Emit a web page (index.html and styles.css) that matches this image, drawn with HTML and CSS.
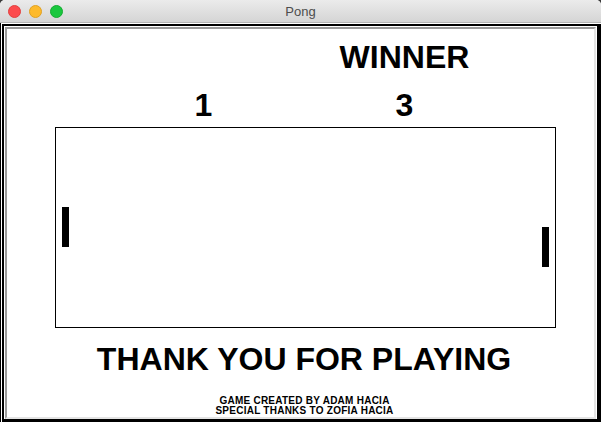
FILE: index.html
```html
<!DOCTYPE html>
<html>
<head>
<meta charset="utf-8">
<link rel="stylesheet" href="styles.css">
<title>Pong</title>
</head>
<body>
<div class="window">
  <div class="titlebar">
    <div class="lights">
      <span class="light red"></span>
      <span class="light yellow"></span>
      <span class="light green"></span>
    </div>
    <div class="title">Pong</div>
  </div>
  <div class="content">
    <div class="frame">
      <div class="inner">
        <div class="scoreboard">
          <div class="winner">WINNER</div>
          <div class="score">1</div>
          <div class="score">3</div>
        </div>
        <div class="field">
          <div class="paddle left"></div>
          <div class="paddle right"></div>
        </div>
        <div class="thanks">THANK YOU FOR PLAYING</div>
        <div class="credits">
          <div>GAME CREATED BY ADAM HACIA</div>
          <div>SPECIAL THANKS TO ZOFIA HACIA</div>
        </div>
      </div>
    </div>
  </div>
</div>
</body>
</html>
```

FILE: styles.css
```css
* { box-sizing: border-box; }
html, body {
  margin: 0;
  padding: 0;
  background: #3a3a3a;
}
.window {
  width: 601px;
  height: 422px;
  background: #fff;
  border-radius: 5px 5px 0 0;
  overflow: hidden;
  font-family: "Liberation Sans", Arial, sans-serif;
}
.titlebar {
  position: relative;
  height: 23px;
  background: linear-gradient(#ebebeb, #d5d5d5);
  border-bottom: 1px solid #b4b4b4;
  display: flex;
  align-items: center;
  justify-content: center;
}
.lights {
  position: absolute;
  left: 8px;
  top: 5px;
  display: flex;
  gap: 8px;
}
.light {
  width: 13px;
  height: 13px;
  border-radius: 50%;
  display: block;
}
.red { background: #fc4b4d; border: 0.5px solid #e0403f; }
.yellow { background: #fdba2c; border: 0.5px solid #dfa023; }
.green { background: #19c73e; border: 0.5px solid #14ab31; }
.title {
  font-size: 13px;
  color: #4d4d4d;
  line-height: 16px;
  margin-top: 1px;
}
.content {
  height: 399px;
  border-left: 1px solid #000;
  padding: 1px 0 0 1px;
}
.frame {
  height: 398px;
  border: 2px solid #000;
  border-right-width: 4px;
  border-bottom-width: 3px;
  padding: 1px;
}
.inner {
  height: 392px;
  border: 2px solid;
  border-color: #9b9b9b #e4e4e4 #e4e4e4 #9b9b9b;
  padding-top: 12px;
  color: #000;
  font-weight: bold;
}
.scoreboard {
  display: grid;
  grid-template-columns: 201px 201px;
  row-gap: 16px;
  margin-left: 96px;
  font-size: 32px;
  line-height: 32px;
  text-align: center;
}
.winner {
  grid-column: 2;
}
.field {
  position: relative;
  margin: 6px 0 0 48px;
  width: 501px;
  height: 201px;
  border: 1px solid #000;
}
.paddle {
  position: absolute;
  width: 7px;
  height: 40px;
  background: #000;
}
.paddle.left { left: 6px; top: 79px; }
.paddle.right { left: 486px; top: 99px; }
.thanks {
  margin: 15px 0 0 48px;
  width: 498px;
  text-align: center;
  font-size: 32px;
  line-height: 32px;
}
.credits {
  margin: 21px 0 0 48px;
  width: 499px;
  text-align: center;
  font-size: 10px;
  line-height: 10px;
  letter-spacing: 0.25px;
}
```
